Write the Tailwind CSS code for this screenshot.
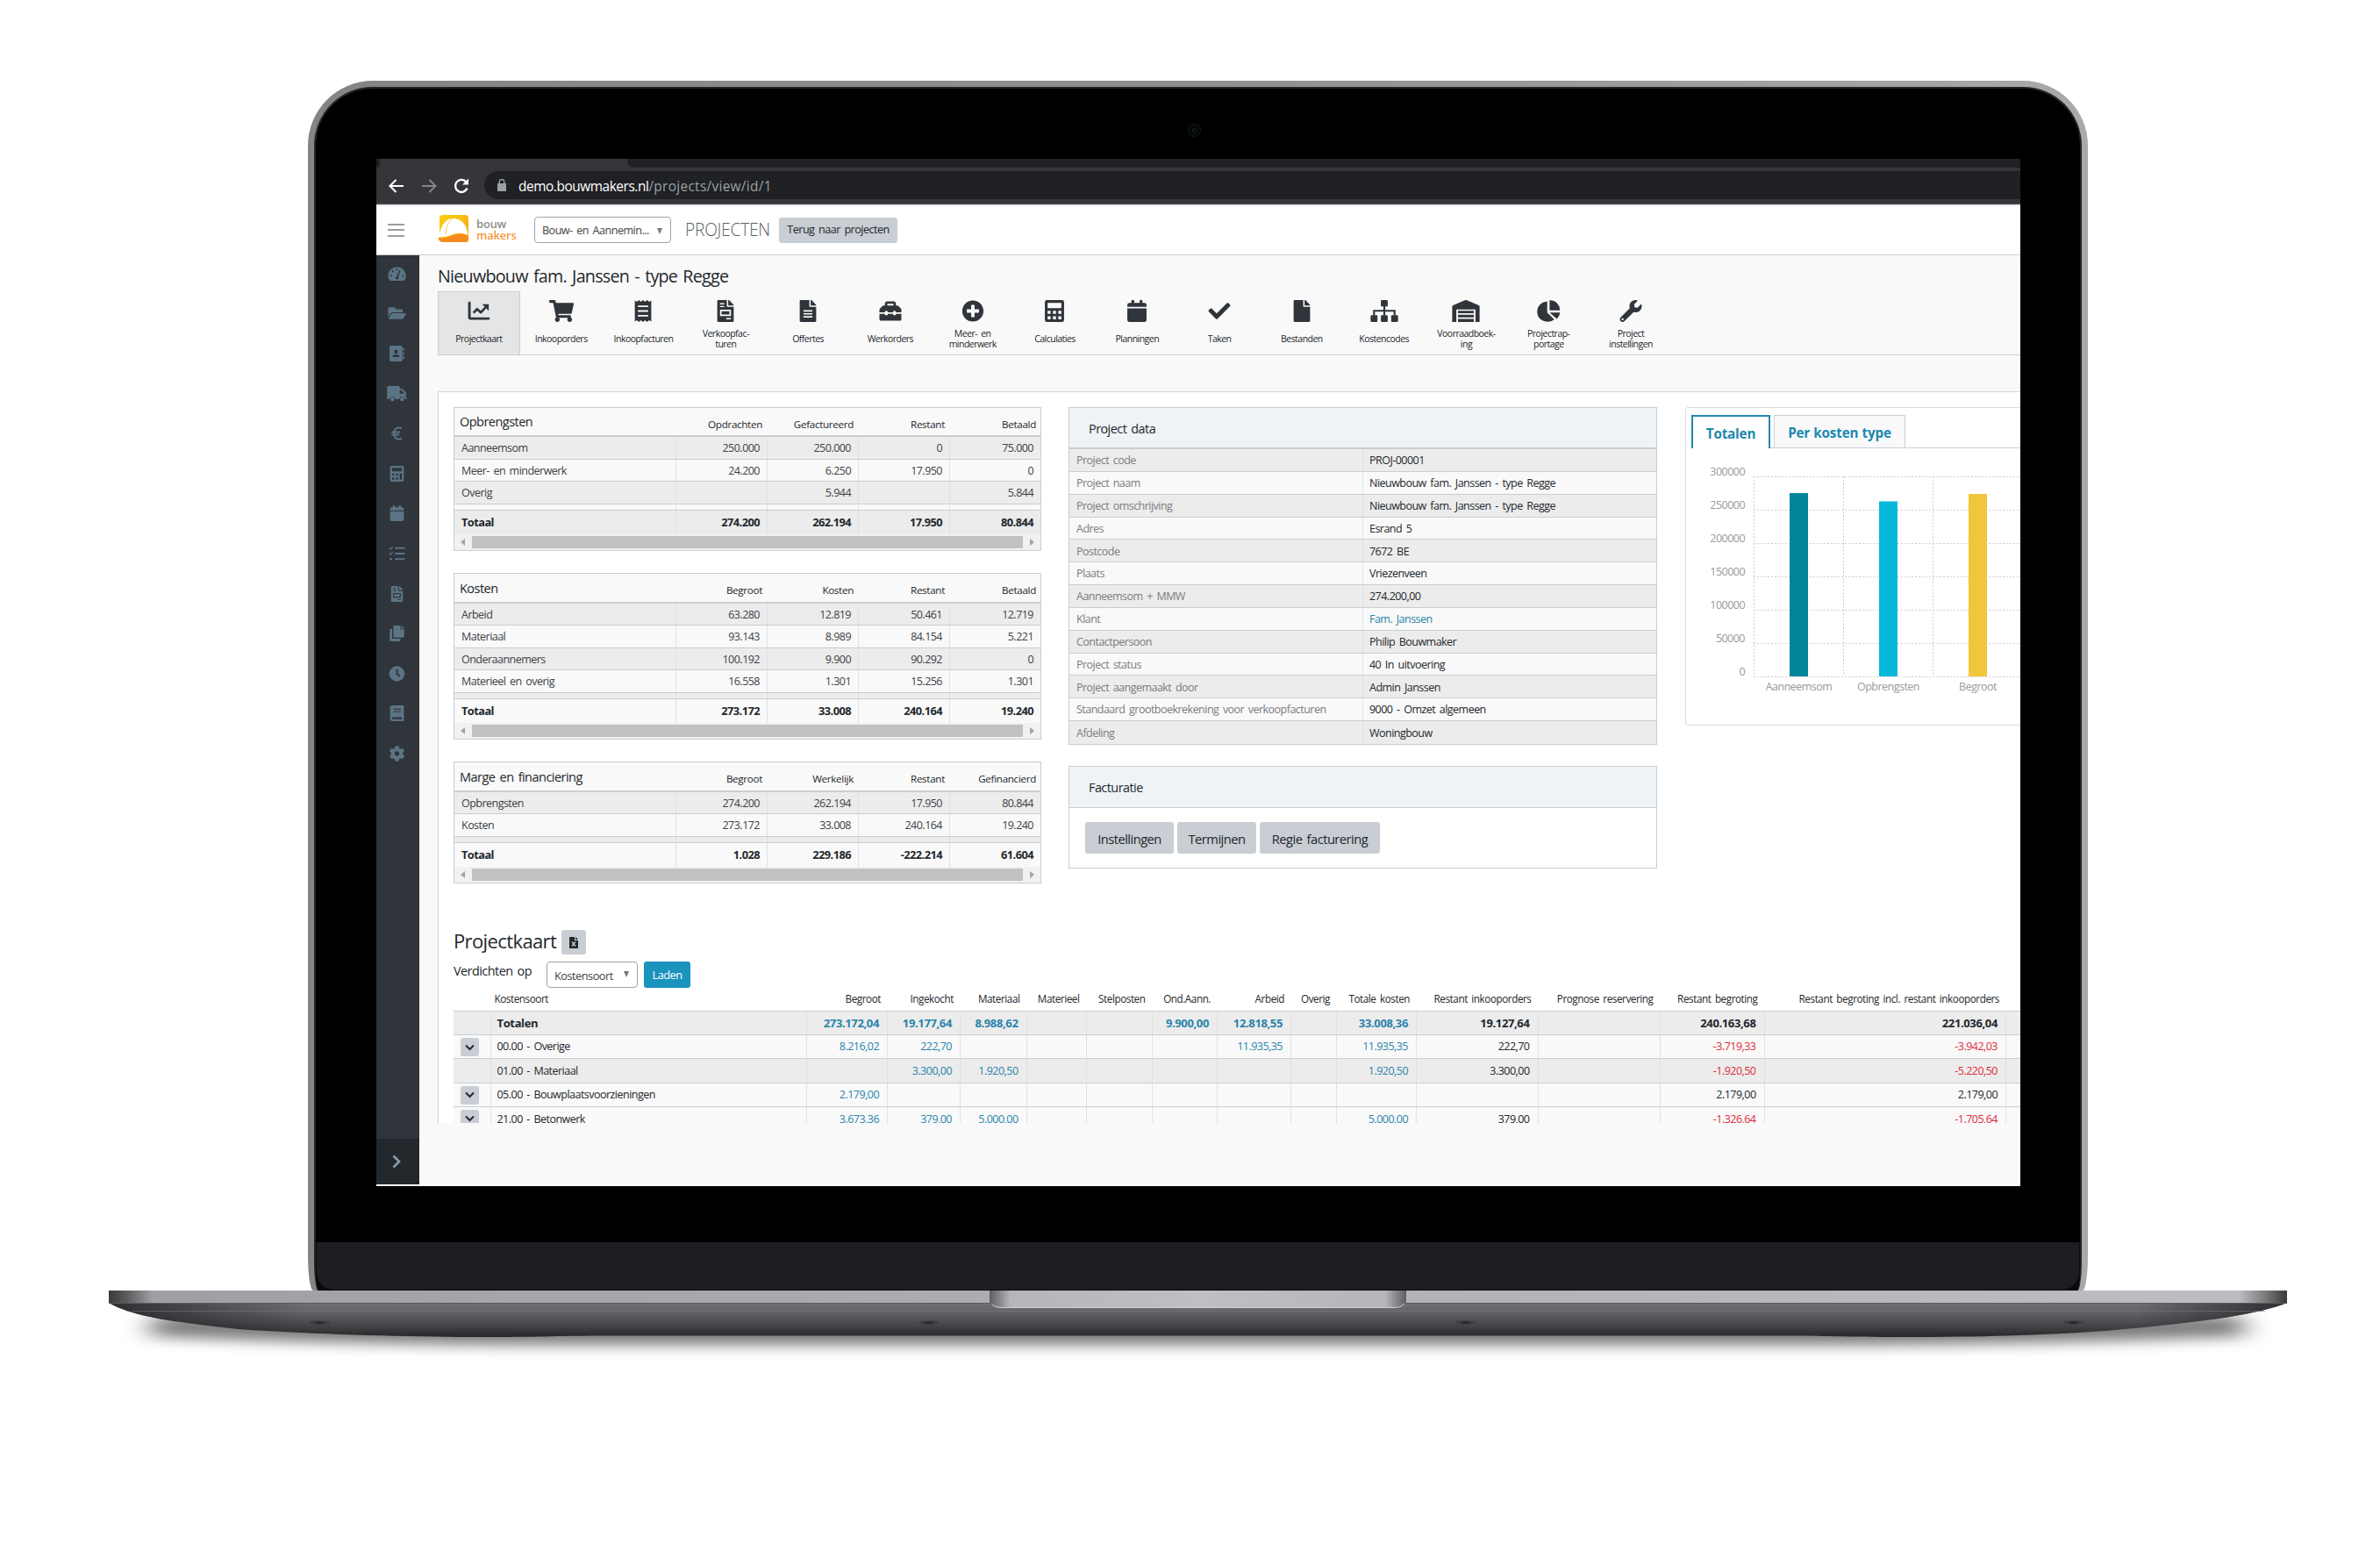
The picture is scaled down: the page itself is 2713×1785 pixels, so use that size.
<!DOCTYPE html>
<html lang="nl">
<head>
<meta charset="utf-8">
<title>Bouwmakers - Projectkaart</title>
<script src="https://cdn.jsdelivr.net/npm/@tailwindcss/browser@4"></script>
</head>
<body class="w-[2713px] h-[1785px] overflow-hidden bg-white font-['Open_Sans',sans-serif] text-[#23282c] text-[12.5px] tracking-[-0.042em] [word-spacing:0.15em] leading-none">

<!-- laptop lid -->
<div class="relative ml-[351px] mt-[92px] w-[2029px] h-[1379px] pt-[7px] px-[7px] rounded-t-[74px] [border-bottom-left-radius:6px_40px] [border-bottom-right-radius:6px_40px] bg-linear-to-r from-[#838583] via-[#8f8f8f] to-[#a9a9ab] overflow-hidden">
  <div class="relative h-full rounded-t-[67px] bg-black border-2 border-b-0 border-[#232524] pt-[80px] pl-[69px] [border-bottom-left-radius:5px_34px] [border-bottom-right-radius:5px_34px] overflow-hidden">
    <div class="absolute left-[994px] top-[40px] size-[15px] rounded-full border border-[#14191a] bg-[#060808] flex items-center justify-center"><div class="size-[5px] rounded-full border border-[#1d2626]"></div></div>

    <!-- display -->
    <div class="relative w-[1874px] h-[1171px] bg-white overflow-hidden flex flex-col">
      <div class="h-[10px] shrink-0 bg-[#202124] flex"><div class="w-[4px] bg-[#35363a]"><div class="w-[4px] h-[10px] bg-[#202124] rounded-br-[6px]"></div></div><div class="w-[282px] bg-[#35363a]"></div><div class="w-[10px] bg-[#35363a]"><div class="h-full rounded-bl-[8px] bg-[#202124]"></div></div></div>
      <div class="h-[42px] shrink-0 bg-[#35363a] border-b border-[#55565a] flex items-center pl-[13px]">
        <svg class="w-[20px] h-[20px] text-white" viewBox="0 0 20 20" fill="none" stroke="currentColor" stroke-width="2.1"><path d="M18 10H3M9.500 3L2.500 10l7 7"/></svg>
        <svg class="w-[20px] h-[20px] ml-[17px] text-[#85868a]" viewBox="0 0 20 20" fill="none" stroke="currentColor" stroke-width="2"><path d="M2 10h15M10.500 3l7 7-7 7"/></svg>
        <svg class="w-[20px] h-[20px] ml-[17px] text-white" viewBox="0 0 20 20" fill="none" stroke="currentColor" stroke-width="2.400"><path d="M16.500 12.500A7 7 0 1 1 15 5l1.500 1.500"/><path d="M18 1.500V8.500H11z" fill="currentColor" stroke="none"/></svg>
        <div class="ml-[16px] mb-px h-[32px] grow rounded-l-full bg-[#202124] flex items-center pl-[15px]">
          <svg class="w-[10px] h-[14px] text-[#9aa0a6]" viewBox="0 0 10 14"><path fill="currentColor" d="M0 5h10v9H0z"/><path fill="none" stroke="currentColor" stroke-width="1.400" d="M2.200 6V3.400a2.800 2.800 0 0 1 5.600 0V6"/></svg>
          <div class="ml-[14px] pt-[3px] text-[15.4px] text-white tracking-[-0.028em]">demo.bouwmakers.nl<span class="text-[#9aa0a6] tracking-[0.02em]">/projects/view/id/1</span></div>
        </div>
      </div>
      <div class="h-px shrink-0 bg-[#c8c8c8]"></div>

      <!-- app header -->
      <header class="h-[57px] shrink-0 border-b border-[#c8ced3] flex items-center pl-[13px]">
        <div class="w-[19px] h-[15px] flex flex-col justify-between"><i class="h-[2px] bg-[#9a9ea2]"></i><i class="h-[2px] bg-[#9a9ea2]"></i><i class="h-[2px] bg-[#9a9ea2]"></i></div>
        <svg class="ml-[38px] mb-[2px] w-[36px] h-[32px]" viewBox="0 0 36 32"><defs><linearGradient id="lg" x1="0" y1="0" x2="1" y2="1"><stop offset="0" stop-color="#fbd20a"/><stop offset="1" stop-color="#f6a21b"/></linearGradient></defs><rect x="2" y="0" width="33" height="31" rx="4" fill="url(#lg)"/><path d="M1 25C3 14 8 4 17 4c10 0 16 7 17 17v2c-8-4-14-2-19 0-4 1.500-9 3-14 2z" fill="#fff"/><path d="M9 22C10 13 12 7 17 4.500" fill="none" stroke="#f9c465" stroke-width="1"/><path d="M0 26c8 2 12-1 18-3 6-1.800 12-1.500 17 1v4q0 3-3 3H6q-4 0-6-5z" fill="#f68a1f"/></svg>
        <div class="ml-[8px] w-[66px] mb-px text-[12.9px] leading-[13px] tracking-[-0.01em] font-semibold text-[#8c8c8c]"><div>bouw</div><div class="text-[#f59a3c]">makers</div></div>
        <div class="w-[156px] h-[30px] rounded-[4px] border border-[#9fa3a8] flex items-center justify-between pl-[8px] pr-[9px] pt-[2px] text-[12.6px] text-[#444]"><span>Bouw- en Aannemin...</span><svg class="w-[6px] h-[7px]" viewBox="0 0 6 7"><path fill="#777" d="M0 0h6L3 7z"/></svg></div>
        <div class="ml-[16px] w-[107px] text-[19.2px] font-light text-[#5d6165] tracking-[-0.012em]">PROJECTEN</div>
        <div class="w-[135px] h-[29px] rounded-[3px] bg-[#c8ced3] flex items-center justify-center pt-px text-[12.6px]">Terug naar projecten</div>
      </header>

      <div class="h-[1059px] shrink-0 flex">
        <nav class="w-[49px] shrink-0 bg-[#2f353a] flex flex-col text-[#5b7485]">
          <div id="side" class="flex flex-col items-center pr-[3px] grow"></div>
          <div class="h-[52px] bg-[#23282c] flex items-center justify-center pr-[3px]"><svg class="w-[10px] h-[16px]" viewBox="0 0 10 16" fill="none" stroke="#869fac" stroke-width="2.600"><path d="M1.500 1.500L8 8l-6.500 6.500"/></svg></div>
        </nav>

        <main class="grow min-w-0 bg-[#f9f9f9] pl-[21px] overflow-hidden">
          <h1 class="h-[41px] pt-[14px] text-[19.7px] leading-[20px] tracking-[-0.038em]">Nieuwbouw fam. Janssen - type Regge</h1>
          <div id="tabs" class="flex h-[73px] border-b border-[#c8ced3] text-[10.5px]"></div>

          <section class="mt-[41px] h-[834px] overflow-hidden bg-white border-t border-l border-[#d3d6d9]">
            <div class="flex pl-[17px] pt-[17px] h-[602px]">
              <div id="finance" class="w-[670px]"></div>

              <div class="ml-[31px] w-[671px]">
                <div class="border border-[#c8ced3]">
                  <div class="h-[47px] bg-[#eff3f6] border-b-2 border-[#c8ced3] flex items-center pt-[3px] pl-[22px] text-[14.4px]">Project data</div>
                  <div id="pdata"></div>
                </div>
                <div class="mt-[24px] h-[117px] border border-[#c8ced3]">
                  <div class="h-[47px] bg-[#eff3f6] border-b border-[#c8ced3] flex items-center pt-[3px] pl-[22px] text-[14.4px]">Facturatie</div>
                  <div class="flex gap-[4px] pl-[18px] pt-[16px] text-[14.7px]">
                    <div class="w-[101px] h-[36px] rounded-[3px] bg-[#c8ced3] flex items-center justify-center pt-[3px]">Instellingen</div>
                    <div class="w-[90px] h-[36px] rounded-[3px] bg-[#c8ced3] flex items-center justify-center pt-[3px]">Termijnen</div>
                    <div class="w-[137px] h-[36px] rounded-[3px] bg-[#c8ced3] flex items-center justify-center pt-[3px]">Regie facturering</div>
                  </div>
                </div>
              </div>

              <div class="ml-[32px] w-[400px] shrink-0 h-[363px] border border-[#d9dcdf] rounded-[3px] pt-[8px]">
                <div class="flex text-[15.2px] font-bold text-[#1c88ae] tracking-[-0.01em] [word-spacing:0.03em]">
                  <div class="w-[6px] border-b border-transparent"></div>
                  <div class="w-[90px] h-[38px] border-2 border-b-0 border-[#2089ae] flex items-center justify-center pt-[3px]">Totalen</div>
                  <div class="w-[4px] border-b border-[#c8ced3]"></div>
                  <div class="w-[150px] h-[38px] border border-[#c8ced3] bg-[#f9f9fa] flex items-center justify-center pt-[4px]">Per kosten type</div>
                  <div class="grow border-b border-[#c8ced3]"></div>
                </div>
                <svg id="chart" class="w-[382px] h-[300px]" viewBox="1922 511 382 300"></svg>
              </div>
            </div>

            <div class="pl-[17px]">
              <div class="flex h-[46px] items-center pt-[4px]"><h2 class="w-[123px] text-[22px] tracking-[-0.028em] h-[27px]">Projectkaart</h2>
                <div class="w-[28px] h-[28px] rounded-[3px] bg-[#c8ced3] flex items-center justify-center"><svg class="w-[10px] h-[13px]" viewBox="0 0 10 13"><path fill="#23282c" d="M0 0h6v4h4v9H0zM7 0l3 3H7z"/><path d="M3 5.500l4 5M7 5.500l-4 5" stroke="#c8ced3" stroke-width="1.300"/></svg></div></div>
              <div class="flex h-[30px] mt-px -mb-px items-center"><div class="w-[106px] pb-[7px] text-[14.4px] whitespace-nowrap">Verdichten op</div>
                <div class="w-[104px] h-[30px] rounded-[4px] border border-[#9fa3a8] flex items-center justify-between pl-[8px] pr-[9px] pt-[3px] text-[12.8px] text-[#444]"><span>Kostensoort</span><svg class="w-[6px] h-[7px] mb-[4px]" viewBox="0 0 6 7"><path fill="#777" d="M0 0h6L3 7z"/></svg></div>
                <div class="ml-[7px] w-[53px] h-[30px] rounded-[3px] bg-[#1a93bd] text-white text-[12.8px] flex items-center justify-center pt-px">Laden</div></div>
              <div id="costs" class="w-[1786px]"></div>
            </div>
          </section>
        </main>
      </div>
      <div class="h-[2px] shrink-0 bg-white"></div>
    </div>

    <!-- chin -->
    <div class="absolute left-0 right-0 bottom-0 h-[55px] bg-[#0b0b0d]"><div class="h-[54px] mx-px bg-[#1d1e22] rounded-b-[20px]"></div></div>
  </div>
</div>

<!-- laptop base -->
<svg class="block w-[2713px] h-[120px]" viewBox="0 1471 2713 120">
  <defs>
    <linearGradient id="rim" x1="124" x2="2607" y1="0" y2="0" gradientUnits="userSpaceOnUse"><stop offset="0" stop-color="#3c3c3d"/><stop offset=".008" stop-color="#5a5a5c"/><stop offset=".02" stop-color="#a0a0a4"/><stop offset=".5" stop-color="#b0afb4"/><stop offset=".978" stop-color="#bdbcc1"/><stop offset=".99" stop-color="#7b7b7d"/><stop offset="1" stop-color="#39393a"/></linearGradient>
    <linearGradient id="hull" x1="0" x2="0" y1="1485" y2="1524" gradientUnits="userSpaceOnUse"><stop offset="0" stop-color="#716f76"/><stop offset=".25" stop-color="#66646b"/><stop offset=".6" stop-color="#4a494e"/><stop offset="1" stop-color="#28282a"/></linearGradient>
    <linearGradient id="ends" x1="124" x2="2607" y1="0" y2="0" gradientUnits="userSpaceOnUse"><stop offset="0" stop-color="#1f1f21" stop-opacity=".8"/><stop offset=".09" stop-color="#1f1f21" stop-opacity="0"/><stop offset=".93" stop-color="#1f1f21" stop-opacity="0"/><stop offset="1" stop-color="#1f1f21" stop-opacity=".8"/></linearGradient>
    <linearGradient id="lip" x1="1128" x2="1603" y1="0" y2="0" gradientUnits="userSpaceOnUse"><stop offset="0" stop-color="#5d5d60"/><stop offset=".05" stop-color="#b6b5ba"/><stop offset=".5" stop-color="#bfbec3"/><stop offset=".95" stop-color="#b6b5ba"/><stop offset="1" stop-color="#5d5d60"/></linearGradient>
    <filter id="blur" x="-5%" y="-100%" width="110%" height="300%"><feGaussianBlur stdDeviation="16 8"/></filter>
  </defs>
  <path d="M175 1500H2555L2560 1523Q2300 1533 2100 1533H620Q400 1533 170 1523z" fill="#000" opacity=".52" filter="url(#blur)"/>
  <path d="M0 1471H2713V1486H0z" fill="#fff"/>
  <path d="M124 1485C150 1500 190 1506 272 1515C358 1521 470 1524 559 1524C620 1524 640 1522.500 690 1522.500H2030C2080 1522.500 2100 1524 2168 1524C2280 1524 2340 1521 2400 1517C2500 1508 2570 1500 2607 1485z" fill="url(#hull)"/>
  <path d="M124 1485C150 1500 190 1506 272 1515C358 1521 470 1524 559 1524C620 1524 640 1522.500 690 1522.500H2030C2080 1522.500 2100 1524 2168 1524C2280 1524 2340 1521 2400 1517C2500 1508 2570 1500 2607 1485z" fill="url(#ends)"/>
  <path d="M150 1494.500H2582" stroke="#77757c" stroke-width="1" opacity=".6"/>
  <path d="M124 1471H2607V1485.500H124z" fill="url(#rim)"/>
  <path d="M124 1485.500H2607" stroke="#5a595e"/>
  <path d="M1128 1471H1603V1482Q1603 1491 1588 1491H1143Q1128 1491 1128 1482z" fill="url(#lip)"/>
  <path d="M1130 1486Q1134 1490.500 1143 1490.500H1588Q1597 1490.500 1601 1486" fill="none" stroke="#d0cfd4"/>
  <g fill="#2c2c2e"><g opacity=".4"><ellipse cx="364" cy="1507.500" rx="12" ry="2.500"/><ellipse cx="1059" cy="1507.500" rx="12" ry="2.500"/><ellipse cx="1671" cy="1507.500" rx="12" ry="2.500"/><ellipse cx="2364" cy="1507.500" rx="12" ry="2.500"/></g><ellipse cx="364" cy="1507.500" rx="5" ry="1.500"/><ellipse cx="1059" cy="1507.500" rx="5" ry="1.500"/><ellipse cx="1671" cy="1507.500" rx="5" ry="1.500"/><ellipse cx="2364" cy="1507.500" rx="5" ry="1.500"/></g>
</svg>

<script>
const FILE='M224 136V0H24C10.700 0 0 10.700 0 24v464c0 13.300 10.700 24 24 24h336c13.300 0 24-10.700 24-24V160H248c-13.200 0-24-10.800-24-24z';
const FOLD='M384 122v6H256V0h6c6.400 0 12.500 2.500 17 7l98 98c4.500 4.500 7 10.600 7 17z';
const I={
 chart:[512,'<path d="M32 64v328q0 40 40 40H480" fill="none" stroke="currentColor" stroke-width="60" stroke-linecap="round"/><path d="M128 300L212 210L300 290L410 170" fill="none" stroke="currentColor" stroke-width="56" stroke-linejoin="round"/><path d="M330 96h142q12 0 12 12v142z"/>'],
 cart:[576,'<path d="M528.120 301.319l47.273-208C578.806 78.301 567.391 64 551.990 64H159.208l-9.166-44.810C147.758 8.021 137.930 0 126.529 0H24C10.745 0 0 10.745 0 24v16c0 13.255 10.745 24 24 24h69.883l70.248 343.435C147.325 417.100 136 435.222 136 456c0 30.928 25.072 56 56 56s56-25.072 56-56c0-15.674-6.447-29.835-16.824-40h209.647C430.447 426.165 424 440.326 424 456c0 30.928 25.072 56 56 56s56-25.072 56-56c0-22.172-12.888-41.332-31.579-50.405l5.517-24.276c3.413-15.018-8.002-29.319-23.403-29.319H218.117l-6.545-32h293.145c11.206 0 20.920-7.754 23.403-18.681z"/>'],
 receipt:[384,'<path fill-rule="evenodd" d="M0 10L48 40L96 0L144 40L192 0L240 40L288 0L336 40L384 10V502L336 472L288 512L240 472L192 512L144 472L96 512L48 472L0 502zM72 130v36h240v-36zM72 238v36h240v-36zM72 346v36h240v-36z"/>'],
 invoice:[384,'<path fill-rule="evenodd" d="'+FILE+'M64 72v28h100V72zM64 136v28h100v-28zM64 224v150h256V224zM100 260h184v78H100zM210 420v28h110v-28z"/><path d="'+FOLD+'"/>'],
 filealt:[384,'<path fill-rule="evenodd" d="'+FILE+'M88 236v34h208v-34zM88 306v34h208v-34zM88 376v34h208v-34z"/><path d="'+FOLD+'"/>'],
 toolbox:[512,'<path fill-rule="evenodd" d="M128 128V88q0-56 56-56h144q56 0 56 56v40h28q20 0 34 14l52 52q14 14 14 34v60H384v-32h-64v32H192v-32h-64v32H0v-60q0-20 14-34l52-52q14-14 34-14zM184 128h144V88H184z"/><path d="M0 320h128v32h64v-32h128v32h64v-32h128v128q0 32-32 32H32q-32 0-32-32z"/>'],
 plus:[512,'<path d="M256 8C119 8 8 119 8 256s111 248 248 248 248-111 248-248S393 8 256 8zm144 276c0 6.600-5.400 12-12 12h-92v92c0 6.600-5.400 12-12 12h-56c-6.600 0-12-5.400-12-12v-92h-92c-6.600 0-12-5.400-12-12v-56c0-6.600 5.400-12 12-12h92v-92c0-6.600 5.400-12 12-12h56c6.600 0 12 5.400 12 12v92h92c6.600 0 12 5.400 12 12v56z"/>'],
 calc:[448,'<path fill-rule="evenodd" d="M48 0H400q48 0 48 48V464q0 48-48 48H48q-48 0-48-48V48Q0 0 48 0zM64 64V190H384V64zM64 250v70h70v-70zM189 250v70h70v-70zM314 250v70h70v-70zM64 380v70h70v-70zM189 380v70h70v-70zM314 380v70h70v-70z"/>'],
 calc2:[448,'<path fill-rule="evenodd" d="M48 0H400q48 0 48 48V464q0 48-48 48H48q-48 0-48-48V48Q0 0 48 0zM64 64V180H384V64zM64 250v60h70v-60zM189 250v60h70v-60zM314 250V450h70V250zM64 380v70h70v-70zM189 380v70h70v-70z"/>'],
 cal:[448,'<path d="M0 192H448V464q0 48-48 48H48q-48 0-48-48zM0 160V112q0-48 48-48H96V12q0-12 12-12h40q12 0 12 12V64H288V12q0-12 12-12h40q12 0 12 12V64h48q48 0 48 48v48z"/>'],
 check:[512,'<path d="M173.898 439.404l-166.400-166.400c-9.997-9.997-9.997-26.206 0-36.204l36.203-36.204c9.997-9.998 26.207-9.998 36.204 0L192 312.690 432.095 72.596c9.997-9.997 26.207-9.997 36.204 0l36.203 36.204c9.997 9.997 9.997 26.206 0 36.204l-294.400 294.401c-9.998 9.997-26.207 9.997-36.204-.001z"/>'],
 file:[384,'<path d="'+FILE+'"/><path d="'+FOLD+'"/>'],
 sitemap:[640,'<rect x="240" width="160" height="150" rx="24"/><rect y="352" width="160" height="160" rx="24"/><rect x="240" y="352" width="160" height="160" rx="24"/><rect x="480" y="352" width="160" height="160" rx="24"/><path d="M320 140V360M80 360V250H560V360" fill="none" stroke="currentColor" stroke-width="44"/>'],
 warehouse:[640,'<path d="M0 512V160q0-24 20-36L296 6q24-10 48 0L620 124q20 12 20 36V512H544V220H96V512zM136 250H504V306H136zM136 342H504V402H136zM136 440H504V512H136z"/>'],
 pie:[544,'<path d="M300 0Q530 15 544 240H300z"/><path d="M245 30V290L410 455Q350 505 270 505Q20 490 10 270Q20 60 245 30z"/><path d="M300 290H544Q535 380 470 440z"/>'],
 wrench:[512,'<path d="M507.730 109.100c-2.240-9.030-13.540-12.090-20.120-5.510l-74.360 74.360-67.880-11.310-11.310-67.880 74.360-74.360c6.620-6.620 3.430-17.900-5.660-20.160-47.380-11.740-99.550.910-136.580 37.930-39.640 39.640-50.550 97.100-34.050 147.200L18.740 402.760c-24.990 24.990-24.990 65.510 0 90.500 24.990 24.990 65.510 24.990 90.500 0l213.210-213.210c50.120 16.710 107.470 5.680 147.370-34.220 37.070-37.070 49.700-89.320 37.910-136.730zM64 472c-13.250 0-24-10.750-24-24 0-13.260 10.750-24 24-24s24 10.740 24 24c0 13.250-10.750 24-24 24z"/>'],
 gauge:[576,'<path fill-rule="evenodd" d="M288 32C129 32 0 161 0 320q0 80 40 140 10 20 30 20H506q20 0 30-20 40-60 40-140C576 161 447 32 288 32zM288 84a30 30 0 1 1 0 60a30 30 0 1 1 0-60zM96 290a30 30 0 1 1 0 60a30 30 0 1 1 0-60zM150 150a30 30 0 1 1 0 60a30 30 0 1 1 0-60zM480 290a30 30 0 1 1 0 60a30 30 0 1 1 0-60zM365 140l40 16L330 350q24 40-2 82H246q-24-60 36-94z"/>'],
 folder:[576,'<path d="M572.694 292.093L500.270 416.248A63.997 63.997 0 0 1 444.989 448H45.025c-18.523 0-30.064-20.093-20.731-36.093l72.424-124.155A64 64 0 0 1 152 256h399.964c18.523 0 30.064 20.093 20.730 36.093zM152 224h328v-48c0-26.510-21.490-48-48-48H272l-64-64H48C21.490 64 0 85.490 0 112v278.046l69.077-118.418C86.214 242.250 117.989 224 152 224z"/>'],
 contact:[512,'<path fill-rule="evenodd" d="M64 0H384q48 0 48 48V464q0 48-48 48H64q-48 0-48-48V48Q16 0 64 0zM224 130a62 62 0 1 0 0 124a62 62 0 1 0 0-124zM112 372H336q0-82-70-82H182q-70 0-70 82z"/><path d="M450 70h30q16 0 16 16v60q0 16-16 16h-30zM450 210h30q16 0 16 16v60q0 16-16 16h-30zM450 350h30q16 0 16 16v60q0 16-16 16h-30z"/>'],
 truck:[640,'<path fill-rule="evenodd" d="M40 0H370q40 0 40 40V90H480q20 0 34 14L596 186q14 14 14 34V380H640V430H576a90 80 0 0 0-180 0H260a90 80 0 0 0-180 0H40Q0 430 0 390V40Q0 0 40 0zM410 140V250H560L470 140z"/><circle cx="170" cy="430" r="66"/><circle cx="486" cy="430" r="66"/>'],
 euro:[384,'<path d="M350 90Q110 10 100 256Q110 500 350 425M20 215H290M20 300H270" fill="none" stroke="currentColor" stroke-width="56"/>'],
 tasks:[512,'<path d="M190 80H512M190 256H512M190 432H512" fill="none" stroke="currentColor" stroke-width="56"/><path d="M10 80l36 36L120 40M10 250l36 36L120 210" fill="none" stroke="currentColor" stroke-width="40"/><circle cx="60" cy="432" r="38"/>'],
 copy:[512,'<path d="M180 0H370V120H490V350q0 40-40 40H180q-40 0-40-40V40q0-40 40-40zM400 0L490 90H400z"/><path d="M100 110H60Q20 110 20 150V472q0 40 40 40H330q40 0 40-40V430H100z"/>'],
 clock:[512,'<path fill-rule="evenodd" d="M256 8a248 248 0 1 0 .1 0zM228 100V270L340 360L372 320L284 250V100z"/>'],
 book:[448,'<path fill-rule="evenodd" d="M80 0H448V512H80Q0 505 0 440V72Q0 5 80 0zM120 110V140H350V110zM120 190V220H350V190zM80 384Q50 390 50 416Q50 442 80 448H384V384z"/>'],
 cog:[512,'<path d="M487.400 315.700l-42.600-24.600c4.300-23.200 4.300-47 0-70.200l42.600-24.600c4.900-2.800 7.100-8.600 5.500-14-11.100-35.600-30-67.800-54.700-94.600-3.800-4.100-10-5.100-14.800-2.300L380.800 110c-17.900-15.400-38.500-27.300-60.800-35.100V25.800c0-5.600-3.900-10.500-9.400-11.700-36.700-8.200-74.300-7.800-109.200 0-5.500 1.200-9.400 6.100-9.400 11.700V75c-22.200 7.900-42.800 19.800-60.800 35.100L88.700 85.500c-4.900-2.800-11-1.900-14.800 2.300-24.700 26.700-43.600 58.900-54.700 94.600-1.700 5.400.6 11.200 5.500 14L67.300 221c-4.300 23.200-4.300 47 0 70.200l-42.600 24.600c-4.900 2.800-7.100 8.600-5.500 14 11.100 35.600 30 67.800 54.700 94.600 3.800 4.100 10 5.100 14.800 2.300l42.600-24.600c17.900 15.400 38.500 27.300 60.800 35.100v49.200c0 5.600 3.900 10.500 9.400 11.700 36.700 8.200 74.300 7.800 109.200 0 5.500-1.200 9.400-6.100 9.400-11.700v-49.200c22.200-7.900 42.800-19.800 60.800-35.100l42.600 24.600c4.900 2.800 11 1.900 14.800-2.300 24.700-26.700 43.600-58.900 54.700-94.600 1.500-5.500-.7-11.300-5.600-14.100zM256 336c-44.100 0-80-35.900-80-80s35.900-80 80-80 80 35.900 80 80-35.900 80-80 80z"/>']
};
const icon=(n,cls)=>`<svg class="${cls}" fill="currentColor" viewBox="0 0 ${I[n][0]} 512">${I[n][1]}</svg>`;
const $=id=>document.getElementById(id);

$('tabs').innerHTML=[['chart','Projectkaart'],['cart','Inkooporders'],['receipt','Inkoopfacturen'],['invoice','Verkoopfac-<br>turen'],['filealt','Offertes'],['toolbox','Werkorders'],['plus','Meer- en<br>minderwerk'],['calc','Calculaties'],['cal','Planningen'],['check','Taken'],['file','Bestanden'],['sitemap','Kostencodes'],['warehouse','Voorraadboek-<br>ing'],['pie','Projectrap-<br>portage'],['wrench','Project<br>instellingen']]
 .map((t,i)=>`<div class="w-[93.8px] shrink-0 flex flex-col items-center ${i?'pt-[10px]':'pt-[9px] bg-[#e4e5e6] border border-b-0 border-[#c8ced3]'}">${icon(t[0],'h-[25px] w-[32px] text-[#2f353a]')}<div class="h-[30px] mt-[4px] flex items-center text-center leading-[12px] whitespace-nowrap">${'<span>'+t[1]+'</span>'}</div></div>`).join('');

$('side').innerHTML=['gauge','folder','contact','truck','euro','calc2','cal','tasks','invoice','copy','clock','book','cog']
 .map((n,i)=>`<div class="h-[45.6px] ${i?'':'-mt-[2px]'} flex items-center justify-center">${icon(n,'h-[18px] w-[23px]')}</div>`).join('');

const fin=[
 ['Opbrengsten',['Opdrachten','Gefactureerd','Restant','Betaald'],[['Aanneemsom','250.000','250.000','0','75.000'],['Meer- en minderwerk','24.200','6.250','17.950','0'],['Overig','','5.944','','5.844']],['274.200','262.194','17.950','80.844']],
 ['Kosten',['Begroot','Kosten','Restant','Betaald'],[['Arbeid','63.280','12.819','50.461','12.719'],['Materiaal','93.143','8.989','84.154','5.221'],['Onderaannemers','100.192','9.900','90.292','0'],['Materieel en overig','16.558','1.301','15.256','1.301']],['273.172','33.008','240.164','19.240']],
 ['Marge en financiering',['Begroot','Werkelijk','Restant','Gefinancierd'],[['Opbrengsten','274.200','262.194','17.950','80.844'],['Kosten','273.172','33.008','240.164','19.240']],['1.028','229.186','-222.214','61.604']]];
const G='grid grid-cols-[252px_104px_104px_104px_104px]';
const bg=i=>i%2?'bg-[#f9f9f9]':'bg-[#ececec]';
$('finance').innerHTML=fin.map(([t,h,rows,tot])=>`<div class="border border-[#c8ced3] mb-[25px] bg-[#f9f9f9]">
 <div class="${G} h-[33.4px] border-b-2 border-[#c8ced3] items-center"><div class="pl-[6px] pt-[2px] text-[14.5px] whitespace-nowrap">${t}</div>${h.map(x=>`<div class="text-right pr-[5px] pt-[6px] text-[11.6px] tracking-[-0.025em]">${x}</div>`).join('')}</div>
 ${rows.map((r,i)=>`<div class="${G} h-[25.5px] border-b border-[#c8ced3] ${bg(i)}">${r.map((c,j)=>j?`<div class="border-l border-[#dfe2e5] flex items-center justify-end pt-[2px] pr-[8px] text-[#3d4145]">${c}</div>`:`<div class="flex items-center pt-[2px] pl-[8px] text-[#3d4145]">${c}</div>`).join('')}</div>`).join('')}
 <div class="${G} h-[7px] border-b border-[#c8ced3] ${bg(rows.length)}"><i></i><i class="border-l border-[#dfe2e5]"></i><i class="border-l border-[#dfe2e5]"></i><i class="border-l border-[#dfe2e5]"></i><i class="border-l border-[#dfe2e5]"></i></div>
 <div class="${G} h-[27px] font-bold text-[12.8px] tracking-[-0.043em] ${bg(rows.length+1)}"><div class="flex items-center pl-[8px]">Totaal</div>${tot.map(c=>`<div class="border-l border-[#dfe2e5] flex items-center justify-end pr-[8px]">${c}</div>`).join('')}</div>
 <div class="h-[18.5px] bg-[#f1f1f1] flex items-center justify-between px-[7px]"><svg class="w-[5px] h-[8px]" viewBox="0 0 5 8"><path fill="#a3a3a3" d="M5 0v8L0 4z"/></svg><div class="w-[628px] h-[14.5px] bg-[#c1c1c1]"></div><svg class="w-[5px] h-[8px]" viewBox="0 0 5 8"><path fill="#a3a3a3" d="M0 0v8l5-4z"/></svg></div>
</div>`).join('');

$('pdata').innerHTML=[['Project code','PROJ-00001'],['Project naam','Nieuwbouw fam. Janssen - type Regge'],['Project omschrijving','Nieuwbouw fam. Janssen - type Regge'],['Adres','Esrand 5'],['Postcode','7672 BE'],['Plaats','Vriezenveen'],['Aanneemsom + MMW','274.200,00'],['Klant','<span class="text-[#2a84ab]">Fam. Janssen</span>'],['Contactpersoon','Philip Bouwmaker'],['Project status','40 In uitvoering'],['Project aangemaakt door','Admin Janssen'],['Standaard grootboekrekening voor verkoopfacturen','9000 - Omzet algemeen'],['Afdeling','Woningbouw']]
 .map((r,i,a)=>`<div class="grid grid-cols-[334px_335px] h-[25.85px] text-[12.5px] ${i<a.length-1?'border-b border-[#c8ced3]':''} ${bg(i)}"><div class="flex items-center pt-[2px] pl-[8px] text-[#7a7d80]">${r[0]}</div><div class="flex items-center pt-[2px] pl-[7px] whitespace-pre border-l border-[#dfe2e5]">${r[1]}</div></div>`).join('');

let s='';
for(let i=0;i<7;i++){const y=543+i*38;s+=`<path d="M1999 ${y}.500H2304" stroke="#cfcfcf" stroke-dasharray="2 2"/><text x="1989" y="${y-1}" text-anchor="end">${300000-i*50000}</text>`;}
[1999,2101,2203].forEach(x=>s+=`<path d="M${x}.500 543V771" stroke="#cfcfcf" stroke-dasharray="2 2"/>`);
[[2040,562,'#02869a','Aanneemsom'],[2142,571.5,'#06b9db','Opbrengsten'],[2244,563,'#f1c53c','Begroot']].forEach(b=>s+=`<rect x="${b[0]}" y="${b[1]}" width="21" height="${771-b[1]}" fill="${b[2]}"/><text x="${b[0]+10.5}" y="786.500" text-anchor="middle">${b[3]}</text>`);
$('chart').innerHTML='<g fill="#9a9a9a" font-size="12.500">'+s+'</g>';

const C='grid grid-cols-[41.5px_360.5px_92px_83px_75.5px_68px_75px_74.5px_84px_52px_91px_138.5px_139px_119px_275.5px_17.5px]';
const blue=[2,3,4,7,8,10];
const heads=['','Kostensoort','Begroot','Ingekocht','Materiaal','Materieel','Stelposten','Ond.Aann.','Arbeid','Overig','Totale kosten','Restant inkooporders','Prognose reservering','Restant begroting','Restant begroting incl. restant inkooporders',''];
const crow=[
 [0,'Totalen','273.172,04','19.177,64','8.988,62','','','9.900,00','12.818,55','','33.008,36','19.127,64','','240.163,68','221.036,04',''],
 [1,'00.00 - Overige','8.216,02','222,70','','','','','11.935,35','','11.935,35','222,70','','-3.719,33','-3.942,03',''],
 [0,'01.00 - Materiaal','','3.300,00','1.920,50','','','','','','1.920,50','3.300,00','','-1.920,50','-5.220,50',''],
 [1,'05.00 - Bouwplaatsvoorzieningen','2.179,00','','','','','','','','','','','2.179,00','2.179,00',''],
 [1,'21.00 - Betonwerk','3.673,36','379,00','5.000,00','','','','','','5.000,00','379,00','','-1.326,64','-1.705,64','']];
const col=(c,j)=>blue.includes(j)?'text-[#2a84ab]':String(c)[0]==='-'?'text-[#e02b3c]':'';
$('costs').innerHTML=`<div class="${C} h-[28px] border-b border-[#c8ced3] text-[11.7px] tracking-[-0.037em]">${heads.map((h,j)=>`<div class="flex items-center pt-px whitespace-nowrap ${j<2?'pl-[5px]':'justify-end pr-[7px]'}">${h}</div>`).join('')}</div>`+
 crow.map((r,i)=>`<div class="${C} h-[27.2px] border-b border-[#c8ced3] ${i===0||i===2?'bg-[#ececec]':'bg-[#f9f9f9]'} ${i?'':'font-bold text-[13px] tracking-[-0.028em]'}">${r.map((c,j)=>j===0?`<div class="flex items-center pl-[8px] pt-px">${c?'<div class="w-[21px] h-[21px] rounded-[3px] bg-[#c8ced3] flex items-center justify-center"><svg class="w-[11px] h-[8px]" viewBox="0 0 11 8" fill="none" stroke="#23282c" stroke-width="2"><path d="M1 1.500l4.500 4.500L10 1.500"/></svg></div>':''}</div>`:`<div class="flex items-center ${i>1?'pt-[2px]':''} whitespace-nowrap border-l border-[#dfe2e5] ${j===1?'pl-[7px]':'justify-end pr-[9px]'} ${col(c,j)}">${c}</div>`).join('')}</div>`).join('');
</script>
</body>
</html>
